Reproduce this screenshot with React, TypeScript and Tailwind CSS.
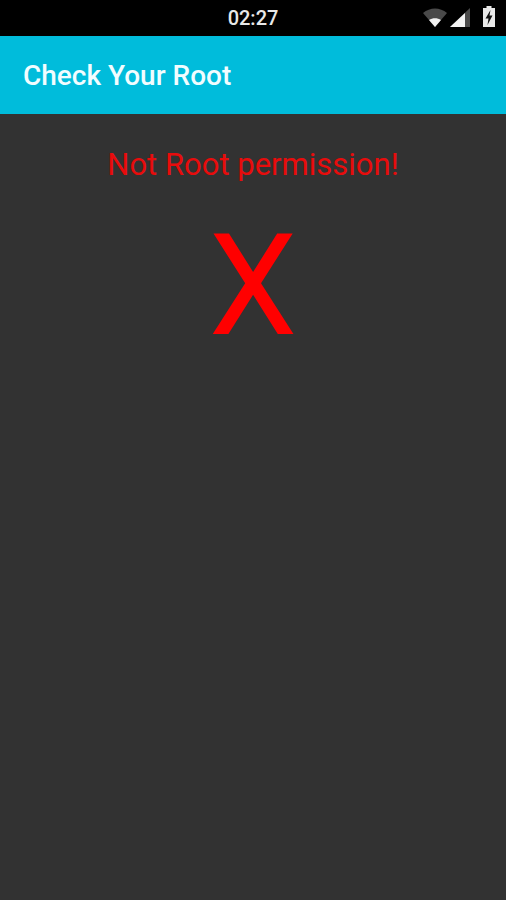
import React from 'react';

const App: React.FC = () => {
  return (
    <div className="h-[900px] w-[506px] overflow-hidden flex flex-col bg-[#323232] font-['Roboto',sans-serif]">
      {/* Status bar */}
      <div className="h-[36px] bg-black relative flex items-center justify-center shrink-0">
        <span className="text-[20px] font-medium text-[#e8e8e8] leading-none">02:27</span>
        <div className="absolute left-[423px] top-[6px] flex items-start">
          <svg width="24" height="20" viewBox="0 0 24 20" className="mt-[2px] mr-[3px]">
            <path d="M0 5 C7 -1 17 -1 24 5 L12 19 Z" fill="#4a4a4a" />
            <path d="M6 12 C9.5 9.5 14.5 9.5 18 12 L12 19 Z" fill="#f2f2f2" />
          </svg>
          <svg width="20" height="20" viewBox="0 0 20 20" className="mt-[2px] mr-[13px]">
            <path d="M0 19 L20 0 V19 Z" fill="#4a4a4a" />
            <path d="M0 19 L15 5 V19 Z" fill="#f2f2f2" />
          </svg>
          <svg width="12" height="21" viewBox="0 0 12 21">
            <path d="M3.5 0 H8.5 V2 H12 V21 H0 V2 H3.5 Z" fill="#e8e8e8" />
            <path d="M7.5 4 L2.5 12.5 H5.5 L4.5 19 L9.5 9.5 H6.5 Z" fill="#111111" />
          </svg>
        </div>
      </div>

      {/* App bar */}
      <div className="h-[78px] bg-[#00bcdb] flex items-center pl-[23px] shrink-0">
        <h1 className="text-[28px] font-medium text-[#f2fdff] leading-none mt-[2px]">Check Your Root</h1>
      </div>

      {/* Content */}
      <div className="flex-1 flex flex-col items-center">
        <p className="mt-[33px] text-[31px] leading-[36px] text-[#e80c0c]">Not Root permission!</p>
        <p className="mt-[20px] text-[141px] leading-[165px] text-[#ff0000]">X</p>
      </div>
    </div>
  );
};

export default App;
